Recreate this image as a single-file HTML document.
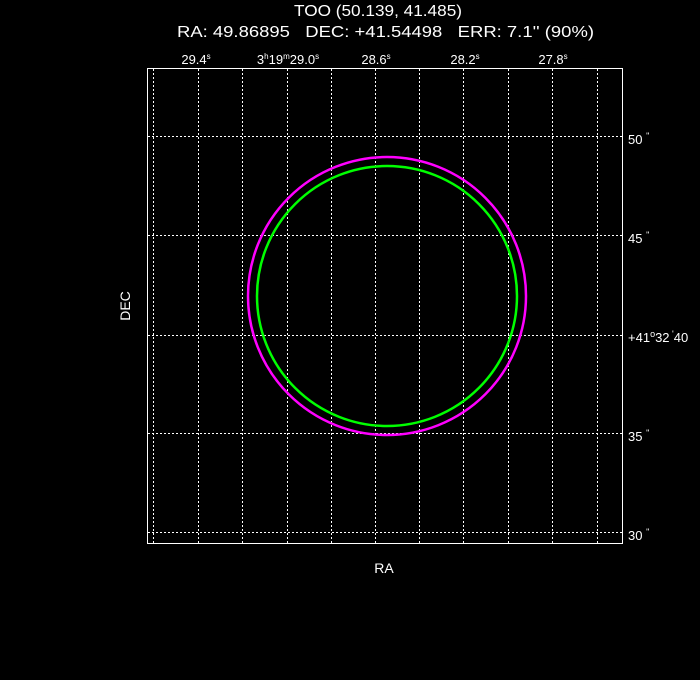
<!DOCTYPE html>
<html><head><style>
html,body{margin:0;padding:0;background:#000;width:700px;height:680px;overflow:hidden}
text{white-space:pre}
</style></head><body>
<svg width="700" height="680" xmlns="http://www.w3.org/2000/svg" font-family="Liberation Sans, sans-serif" fill="#fff" xml:space="preserve">
<rect width="700" height="680" fill="#000"/>
<text x="294" y="16" font-size="16" textLength="168" lengthAdjust="spacingAndGlyphs">TOO (50.139, 41.485)</text>
<text x="177" y="37" font-size="16" textLength="417" lengthAdjust="spacingAndGlyphs">RA: 49.86895   DEC: +41.54498   ERR: 7.1'' (90%)</text>
<g font-size="13" text-anchor="middle">
<text x="196" y="64">29.4<tspan font-size="8" dy="-5">s</tspan></text>
<text x="288" y="64">3<tspan font-size="8" dy="-5">h</tspan><tspan dy="5">19</tspan><tspan font-size="8" dy="-5">m</tspan><tspan dy="5">29.0</tspan><tspan font-size="8" dy="-5">s</tspan></text>
<text x="376" y="64">28.6<tspan font-size="8" dy="-5">s</tspan></text>
<text x="465" y="64">28.2<tspan font-size="8" dy="-5">s</tspan></text>
<text x="553" y="64">27.8<tspan font-size="8" dy="-5">s</tspan></text>
</g>
<g font-size="13">
<text x="628" y="144">50 <tspan font-size="9" dy="-5">"</tspan></text>
<text x="628" y="243">45 <tspan font-size="9" dy="-5">"</tspan></text>
<text x="628" y="342">+41<tspan font-size="9" dy="-5">o</tspan><tspan dy="5">32</tspan><tspan font-size="9" dy="-5"> '</tspan><tspan dy="5">40</tspan></text>
<text x="628" y="441">35 <tspan font-size="9" dy="-5">"</tspan></text>
<text x="628" y="540">30 <tspan font-size="9" dy="-5">"</tspan></text>
</g>
<text x="130" y="306" font-size="14" text-anchor="middle" transform="rotate(-90 130 306)">DEC</text>
<text x="384" y="573" font-size="14" text-anchor="middle">RA</text>
<g stroke="#fff" stroke-width="1" stroke-dasharray="2,2">
<line x1="153.5" y1="69" x2="153.5" y2="543"/>
<line x1="198.5" y1="69" x2="198.5" y2="543"/>
<line x1="242.5" y1="69" x2="242.5" y2="543"/>
<line x1="287.5" y1="69" x2="287.5" y2="543"/>
<line x1="331.5" y1="69" x2="331.5" y2="543"/>
<line x1="375.5" y1="69" x2="375.5" y2="543"/>
<line x1="419.5" y1="69" x2="419.5" y2="543"/>
<line x1="463.5" y1="69" x2="463.5" y2="543"/>
<line x1="508.5" y1="69" x2="508.5" y2="543"/>
<line x1="552.5" y1="69" x2="552.5" y2="543"/>
<line x1="597.5" y1="69" x2="597.5" y2="543"/>
<line x1="148" y1="136.5" x2="622" y2="136.5"/>
<line x1="148" y1="235.5" x2="622" y2="235.5"/>
<line x1="148" y1="335.5" x2="622" y2="335.5"/>
<line x1="148" y1="433.5" x2="622" y2="433.5"/>
<line x1="148" y1="532.5" x2="622" y2="532.5"/>
</g>
<rect x="147.5" y="68.5" width="475" height="475" fill="none" stroke="#fff"/>
<circle cx="387" cy="296" r="139" fill="none" stroke="#f0f" stroke-width="2.5"/>
<circle cx="387" cy="296" r="130" fill="none" stroke="#0f0" stroke-width="2.5"/>
</svg>
</body></html>
